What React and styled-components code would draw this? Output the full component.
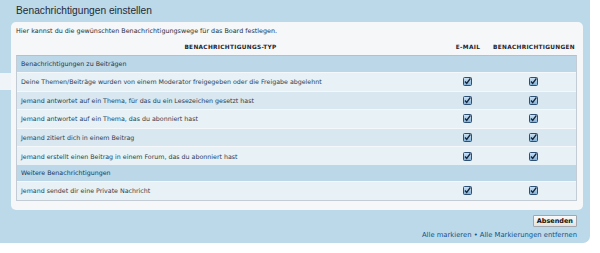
import styled, { createGlobalStyle } from 'styled-components';

const GlobalStyle = createGlobalStyle`
  body {
    margin: 0;
    background: #ffffff;
    font-family: "DejaVu Sans", Verdana, sans-serif;
  }
`;

const sections = [
  {
    title: 'Benachrichtigungen zu Beiträgen',
    items: [
      'Deine Themen/Beiträge wurden von einem Moderator freigegeben oder die Freigabe abgelehnt',
      'Jemand antwortet auf ein Thema, für das du ein Lesezeichen gesetzt hast',
      'Jemand antwortet auf ein Thema, das du abonniert hast',
      'Jemand zitiert dich in einem Beitrag',
      'Jemand erstellt einen Beitrag in einem Forum, das du abonniert hast',
    ],
  },
  {
    title: 'Weitere Benachrichtigungen',
    items: ['Jemand sendet dir eine Private Nachricht'],
  },
];

const Checkbox = () => (
  <svg width="9" height="9" viewBox="0 0 9 9">
    <defs>
      <linearGradient id="cbfill" x1="0" y1="0" x2="0" y2="1">
        <stop offset="0" stopColor="#cfe3f3" />
        <stop offset="1" stopColor="#7fb0d8" />
      </linearGradient>
    </defs>
    <rect x="0.5" y="0.5" width="8" height="8" rx="1" fill="url(#cbfill)" stroke="#2d4f73" />
    <path d="M2 4.6 L3.7 6.4 L7.4 1.4" fill="none" stroke="#14263a" strokeWidth="1.4" />
  </svg>
);

const App = () => {
  return (
    <>
      <GlobalStyle />
      <Page>
        <Title>Benachrichtigungen einstellen</Title>
        <Panel>
          <Intro>Hier kannst du die gewünschten Benachrichtigungswege für das Board festlegen.</Intro>
          <HeadRow>
            <span>Benachrichtigungs-Typ</span>
            <span>E-Mail</span>
            <span>Benachrichtigungen</span>
          </HeadRow>
          <Table>
            {sections.map((s) => (
              <div key={s.title}>
                <SectionRow>{s.title}</SectionRow>
                {s.items.map((item, i) => (
                  <Row key={item} $alt={i % 2 === 1}>
                    <span>{item}</span>
                    <Cell><Checkbox /></Cell>
                    <Cell><Checkbox /></Cell>
                  </Row>
                ))}
              </div>
            ))}
          </Table>
        </Panel>
        <Footer>
          <Button>Absenden</Button>
          <Links>
            <a>Alle markieren</a> &bull; <a>Alle Markierungen entfernen</a>
          </Links>
        </Footer>
      </Page>
    </>
  );
};

const Page = styled.div`
  width: 590px;
  height: 243px;
  box-sizing: border-box;
  background: #bcd9e9;
  border-bottom-right-radius: 7px;
  padding: 4px 7px 0 11px;
`;

const Title = styled.h2`
  margin: 0 0 0 5px;
  height: 18px;
  line-height: 14px;
  font-family: "Liberation Sans", Arial, sans-serif;
  font-size: 10.2px;
  font-weight: normal;
  color: #1f2a36;
`;

const Panel = styled.div`
  position: relative;
  height: 188px;
  box-sizing: border-box;
  background: #f5f7f8;
  border-radius: 5px;
  padding: 3px 6px 0 5px;

  &::before {
    content: '';
    position: absolute;
    left: -11px;
    top: 51px;
    width: 11px;
    height: 17px;
    background: #eef4f8;
  }
`;

const Intro = styled.p`
  margin: 0;
  height: 14px;
  line-height: 12px;
  font-size: 6.4px;
  color: #2a2f36;
`;

const cols = `
  display: grid;
  grid-template-columns: 1fr 46px 86px;
  align-items: center;
`;

const HeadRow = styled.div`
  ${cols}
  height: 16px;
  font-size: 5.8px;
  font-weight: bold;
  letter-spacing: 0.3px;
  text-transform: uppercase;
  color: #1c2430;
  text-align: center;
`;

const Table = styled.div`
  border: 1px solid #c3ccd5;
  border-top-color: #b5c0ca;
`;

const SectionRow = styled.div`
  height: 16px;
  line-height: 16px;
  padding-left: 4px;
  background: #bcd8e8;
  font-size: 6.3px;
  color: #223548;
`;

const Row = styled.div`
  ${cols}
  height: 17.6px;
  border-top: 1px solid #f4f8fb;
  padding-left: 4px;
  background: ${(p) => (p.$alt ? '#d8e7f0' : '#e7f1f6')};
  font-size: 6.3px;
  color: #2a3d52;
`;

const Cell = styled.span`
  display: flex;
  justify-content: center;
  align-items: center;
`;

const Footer = styled.div`
  display: flex;
  flex-direction: column;
  align-items: flex-end;
  padding: 5px 6px 0 0;
  gap: 4px;
`;

const Button = styled.button`
  height: 12px;
  padding: 0 3px;
  border: 1px solid #a3a7ab;
  border-radius: 1px;
  background: linear-gradient(#fafafa, #e2e2e2);
  font-family: "DejaVu Sans", Verdana, sans-serif;
  font-size: 6.5px;
  font-weight: bold;
  color: #111;
  line-height: 10px;
`;

const Links = styled.div`
  font-size: 6.8px;
  color: #105289;

  a {
    color: #105289;
  }
`;

export default App;
